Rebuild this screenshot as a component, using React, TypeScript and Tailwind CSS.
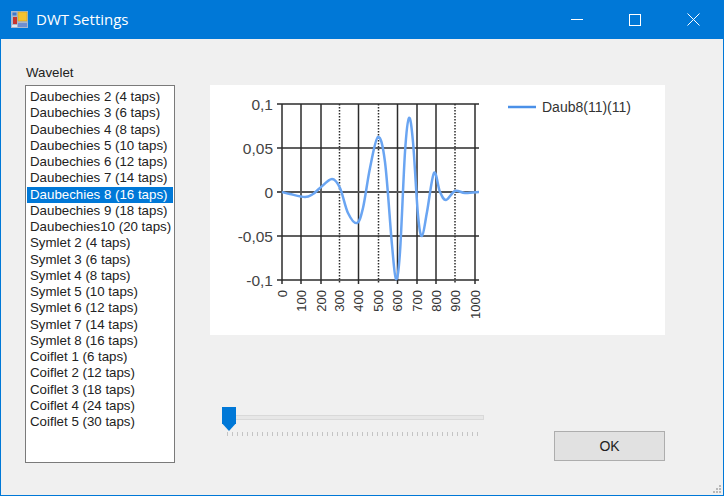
const items = [
  'Daubechies 2 (4 taps)',
  'Daubechies 3 (6 taps)',
  'Daubechies 4 (8 taps)',
  'Daubechies 5 (10 taps)',
  'Daubechies 6 (12 taps)',
  'Daubechies 7 (14 taps)',
  'Daubechies 8 (16 taps)',
  'Daubechies 9 (18 taps)',
  'Daubechies10 (20 taps)',
  'Symlet 2 (4 taps)',
  'Symlet 3 (6 taps)',
  'Symlet 4 (8 taps)',
  'Symlet 5 (10 taps)',
  'Symlet 6 (12 taps)',
  'Symlet 7 (14 taps)',
  'Symlet 8 (16 taps)',
  'Coiflet 1 (6 taps)',
  'Coiflet 2 (12 taps)',
  'Coiflet 3 (18 taps)',
  'Coiflet 4 (24 taps)',
  'Coiflet 5 (30 taps)',
];

// grid positions inside the 455x250 chart panel
const gridX = [72, 91, 111, 129.5, 148.5, 168.5, 187.5, 207, 226, 245, 265];
const gridY = [19, 63, 107, 151, 195];
const yLabels = ['0,1', '0,05', '0', '-0,05', '-0,1'];
const xLabels = ['0', '100', '200', '300', '400', '500', '600', '700', '800', '900', '1000'];
const curve: [number, number][] = [
  [72, 107], [80, 109], [95, 112], [103, 109], [110, 103], [122, 94], [130, 103], [138, 128],
  [147, 138], [153, 123], [160, 83], [168, 52], [175, 77], [182, 160], [186, 194], [190, 167],
  [195, 67], [199, 33], [203, 57], [208, 130], [212, 151], [217, 127], [224, 88], [230, 107],
  [236, 115], [245, 106], [255, 108], [269, 107],
];

function smooth(pts: [number, number][]) {
  let d = `M${pts[0][0]} ${pts[0][1]}`;
  for (let i = 0; i < pts.length - 1; i++) {
    const p0 = pts[Math.max(i - 1, 0)];
    const p1 = pts[i];
    const p2 = pts[i + 1];
    const p3 = pts[Math.min(i + 2, pts.length - 1)];
    const c1x = p1[0] + (p2[0] - p0[0]) / 6;
    const c1y = p1[1] + (p2[1] - p0[1]) / 6;
    const c2x = p2[0] - (p3[0] - p1[0]) / 6;
    const c2y = p2[1] - (p3[1] - p1[1]) / 6;
    d += ` C${c1x} ${c1y} ${c2x} ${c2y} ${p2[0]} ${p2[1]}`;
  }
  return d;
}

function Chart() {
  return (
    <svg width={455} height={250} className="block" style={{ fontFamily: '"Liberation Sans", sans-serif' }}>
      {gridX.map((x, i) => (
        <line key={x} x1={x} y1={19} x2={x} y2={199} stroke="#2b2b2b" strokeWidth={1.5} strokeDasharray={i === 3 || i === 5 || i === 9 ? '1.5 1.5' : undefined} />
      ))}
      {gridY.map((y, i) => (
        <line key={y} x1={67} y1={y} x2={269} y2={y} stroke={i === 2 ? '#555555' : '#2b2b2b'} strokeWidth={i === 2 ? 2 : 1.5} />
      ))}
      {yLabels.map((t, i) => (
        <text key={t} x={63} y={gridY[i] + 6} textAnchor="end" fontSize={15.5} fill="#444444">{t}</text>
      ))}
      {xLabels.map((t, i) => (
        <text key={t} transform={`translate(${gridX[i] + 4.5} 205) rotate(-90)`} textAnchor="end" fontSize={13} fill="#333333">{t}</text>
      ))}
      <path d={smooth(curve)} fill="none" stroke="#6aa5f2" strokeWidth={2.5} />
      <line x1={298} y1={22} x2={326} y2={22} stroke="#4a90e8" strokeWidth={2.5} />
      <text x={332} y={27} fontSize={14} fill="#333333">Daub8(11)(11)</text>
    </svg>
  );
}

function AppIcon() {
  return (
    <svg width={17} height={17} viewBox="0 0 17 17" className="shrink-0">
      <rect x={0} y={0} width={17} height={17} fill="#a9b8cc" />
      <rect x={1.5} y={1.5} width={4} height={3} fill="#3f78c9" />
      <rect x={7} y={1} width={9} height={9} fill="#f2c230" stroke="#c79a1c" strokeWidth={0.5} />
      <rect x={2} y={6} width={4} height={7} fill="#c8342c" />
      <rect x={7} y={12} width={9} height={4} fill="#6f8fd0" />
      <rect x={1} y={14} width={5} height={2} fill="#dfe6f0" />
    </svg>
  );
}

export default function App() {
  return (
    <div className="w-[724px] h-[496px] flex flex-col bg-[#f0f0f0] border-x border-b border-[#0078d7] text-[#222222] overflow-hidden" style={{ fontFamily: '"Liberation Sans", sans-serif' }}>
      {/* title bar */}
      <div className="h-[39px] shrink-0 -mx-px bg-[#0078d7] flex items-center pl-[11px] text-white">
        <AppIcon />
        <span className="ml-[8px] text-[15px] flex-1" style={{ fontFamily: '"Open Sans", sans-serif' }}>DWT Settings</span>
        <div className="flex items-center mr-[2px]">
          <div className="w-[58px] h-[39px] flex items-center justify-center">
            <div className="w-[12px] h-px bg-white" />
          </div>
          <div className="w-[58px] h-[39px] flex items-center justify-center">
            <div className="w-[12px] h-[12px] border border-white" />
          </div>
          <div className="w-[58px] h-[39px] flex items-center justify-center">
            <svg width={13} height={13} viewBox="0 0 13 13"><path d="M0.5 0.5L12.5 12.5M12.5 0.5L0.5 12.5" stroke="#ffffff" strokeWidth={1} /></svg>
          </div>
        </div>
      </div>

      {/* body */}
      <div className="flex-1 flex pl-[24px] pt-[26px] relative">
        <div className="w-[150px] shrink-0">
          <div className="text-[13.3px] leading-[16px] pb-[4px] pl-[1px]">Wavelet</div>
          <div className="h-[378px] bg-white border border-[#7a7a7a] px-px pt-[3px]">
            {items.map((item, i) => (
              <div key={item} className={`h-[16.25px] leading-[16.25px] text-[13.3px] pl-[3px] whitespace-nowrap ${i === 6 ? 'bg-[#0078d7] text-white' : ''}`}>
                {item}
              </div>
            ))}
          </div>
        </div>

        <div className="ml-[35px] pt-[20px]">
          <div className="w-[455px] h-[250px] bg-white">
            <Chart />
          </div>
          <div className="flex mt-[72px]">
            <div className="w-[274px] relative h-[32px]">
              <div className="absolute left-[20px] right-0 top-[8px] h-[5px] bg-[#e7e7e7] border border-[#d9d9d9]" />
              <div className="absolute left-[12px] top-0 w-[14px] h-[24px] bg-[#0078d7] [clip-path:polygon(0_0,100%_0,100%_68%,50%_100%,0_68%)]" />
              <div className="absolute left-[17px] right-[6px] top-[25px] flex justify-between">
                {Array.from({ length: 51 }).map((_, i) => (
                  <div key={i} className="w-px h-[4px] bg-[#c4c4c4]" />
                ))}
              </div>
            </div>
            <button className="ml-[70px] mt-[24px] w-[111px] h-[30px] bg-[#e1e1e1] border border-[#adadad] text-[14px] text-[#222222]">OK</button>
          </div>
        </div>

        <div className="absolute right-[2px] bottom-[2px] grid grid-cols-3 gap-px">
          <span /><span /><span className="w-[2px] h-[2px] bg-[#b8b8b8]" />
          <span /><span className="w-[2px] h-[2px] bg-[#b8b8b8]" /><span className="w-[2px] h-[2px] bg-[#b8b8b8]" />
          <span className="w-[2px] h-[2px] bg-[#b8b8b8]" /><span className="w-[2px] h-[2px] bg-[#b8b8b8]" /><span className="w-[2px] h-[2px] bg-[#b8b8b8]" />
        </div>
      </div>
    </div>
  );
}
